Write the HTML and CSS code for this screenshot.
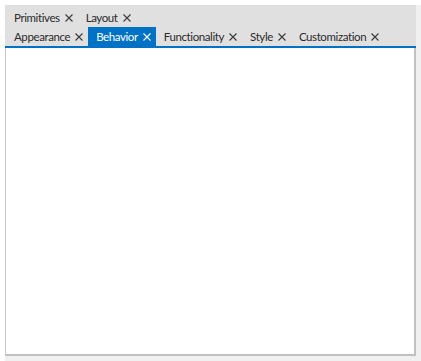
FILE: index.html
```html
<!DOCTYPE html>
<html lang="en">
<head>
    <meta charset="UTF-8">
    <title>Tabs</title>
    <link rel="stylesheet" href="styles.css">
</head>
<body>
    <div class="frame">
        <div class="tab-control">
            <div class="tab-header">
                <div class="tab-row">
                    <div class="tab">Primitives <svg class="close" viewBox="0 0 8 8"><path d="M0.5 0.5L7.5 7.5M7.5 0.5L0.5 7.5"/></svg></div>
                    <div class="tab">Layout <svg class="close" viewBox="0 0 8 8"><path d="M0.5 0.5L7.5 7.5M7.5 0.5L0.5 7.5"/></svg></div>
                </div>
                <div class="tab-row">
                    <div class="tab">Appearance <svg class="close" viewBox="0 0 8 8"><path d="M0.5 0.5L7.5 7.5M7.5 0.5L0.5 7.5"/></svg></div>
                    <div class="tab active">Behavior <svg class="close" viewBox="0 0 8 8"><path d="M0.5 0.5L7.5 7.5M7.5 0.5L0.5 7.5"/></svg></div>
                    <div class="tab">Functionality <svg class="close" viewBox="0 0 8 8"><path d="M0.5 0.5L7.5 7.5M7.5 0.5L0.5 7.5"/></svg></div>
                    <div class="tab">Style <svg class="close" viewBox="0 0 8 8"><path d="M0.5 0.5L7.5 7.5M7.5 0.5L0.5 7.5"/></svg></div>
                    <div class="tab">Customization <svg class="close" viewBox="0 0 8 8"><path d="M0.5 0.5L7.5 7.5M7.5 0.5L0.5 7.5"/></svg></div>
                </div>
            </div>
            <div class="tab-content"></div>
        </div>
    </div>
</body>
</html>
```

FILE: styles.css
```css
* {
    box-sizing: border-box;
    margin: 0;
    padding: 0;
}

body {
    font-family: Lato, 'Noto Sans', sans-serif;
    background: #ffffff;
    overflow: hidden;
}

.frame {
    margin: 5px 0 0 5px;
    padding: 0 5px 5px 0;
    background: #f0f0f0;
    width: 421px;
}

.tab-control {
    width: 411px;
    height: 351px;
    display: flex;
    flex-direction: column;
}

.tab-header {
    background: #e0e0e0;
    padding: 3px 0 0 1px;
    border-bottom: 2px solid #0072c6;
}

.tab-row {
    display: flex;
    height: 19px;
}

.tab {
    display: flex;
    align-items: center;
    gap: 5px;
    padding: 0 5px 0 8px;
    font-size: 11.5px;
    letter-spacing: -0.4px;
    color: #2b2b2b;
    white-space: nowrap;
}

.tab.active {
    background: #0072c6;
    color: #ffffff;
}

.close {
    width: 8px;
    height: 8px;
    stroke: #3a3a3a;
    stroke-width: 1.1;
    fill: none;
}

.tab.active .close {
    stroke: #ffffff;
}

.tab-content {
    flex: 1;
    background: #ffffff;
    border-left: 1px solid #c6c6c6;
    border-right: 2px solid #c0c0c0;
    border-bottom: 2px solid #c0c0c0;
}
```
